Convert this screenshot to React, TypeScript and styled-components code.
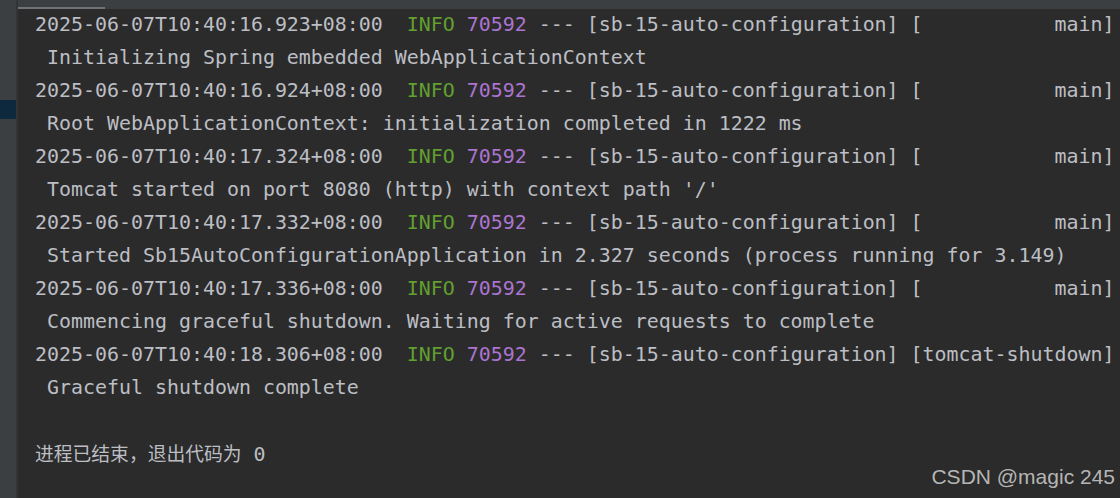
import React from "react";
import styled, { createGlobalStyle } from "styled-components";

const Global = createGlobalStyle`
  html, body { margin: 0; padding: 0; background: #2b2b2b; }
  #root { width: 1120px; height: 498px; overflow: hidden; }
`;

const Frame = styled.div`
  position: relative;
  display: flex;
  width: 1120px;
  height: 498px;
  background: #2b2b2b;
  overflow: hidden;
`;

const Sidebar = styled.div`
  width: 16px;
  flex: none;
  background: #3c3f41;
  display: flex;
  flex-direction: column;
  padding-top: 100px;
  box-sizing: border-box;
`;

const SelectedItem = styled.div`
  height: 19px;
  background: #0d293e;
`;

const Divider = styled.div`
  width: 2px;
  flex: none;
  background: #323436;
`;

const Main = styled.div`
  flex: 1;
  display: flex;
  flex-direction: column;
  min-width: 0;
`;

const TopBar = styled.div`
  height: 9px;
  flex: none;
  background: #3c3f41;
  display: flex;
  align-items: flex-end;
  position: relative;
  z-index: 1;
`;

const Thumb = styled.div`
  width: 87px;
  height: 2px;
  background: #6f7276;
`;

const Log = styled.div`
  margin-top: -1.5px;
  padding-left: 17px;
  font-family: "DejaVu Sans Mono", "Liberation Mono", monospace;
  font-size: 19.93px;
  line-height: 33.08px;
  color: #bcbec4;
  white-space: pre;
`;

const Line = styled.div`
  height: 33.08px;
`;

const Level = styled.span`
  color: #62a030;
`;

const Pid = styled.span`
  color: #ab74cf;
`;

const Cjk = styled.span`
  font-family: "Noto Sans CJK SC", sans-serif;
  font-size: 18.8px;
  line-height: 0;
`;

const Watermark = styled.div`
  position: absolute;
  right: 5px;
  top: 464px;
  font-family: "Liberation Sans", Arial, sans-serif;
  font-size: 21px;
  color: rgba(200, 200, 200, 0.9);
  line-height: 26px;
`;

type Entry = { time: string; thread: string; msg: string };

const entries: Entry[] = [
  { time: "2025-06-07T10:40:16.923+08:00", thread: "           main", msg: " Initializing Spring embedded WebApplicationContext" },
  { time: "2025-06-07T10:40:16.924+08:00", thread: "           main", msg: " Root WebApplicationContext: initialization completed in 1222 ms" },
  { time: "2025-06-07T10:40:17.324+08:00", thread: "           main", msg: " Tomcat started on port 8080 (http) with context path '/'" },
  { time: "2025-06-07T10:40:17.332+08:00", thread: "           main", msg: " Started Sb15AutoConfigurationApplication in 2.327 seconds (process running for 3.149)" },
  { time: "2025-06-07T10:40:17.336+08:00", thread: "           main", msg: " Commencing graceful shutdown. Waiting for active requests to complete" },
  { time: "2025-06-07T10:40:18.306+08:00", thread: "tomcat-shutdown", msg: " Graceful shutdown complete" },
];

export default function App() {
  return (
    <>
      <Global />
      <Frame>
        <Sidebar>
          <SelectedItem />
        </Sidebar>
        <Divider />
        <Main>
          <TopBar>
            <Thumb />
          </TopBar>
          <Log>
            {entries.map((e, i) => (
              <React.Fragment key={i}>
                <Line>
                  {e.time}  <Level>INFO</Level> <Pid>70592</Pid> --- [sb-15-auto-configuration] [{e.thread}]
                </Line>
                <Line>{e.msg}</Line>
              </React.Fragment>
            ))}
            <Line> </Line>
            <Line>
              <Cjk>进程已结束，退出代码为</Cjk> 0
            </Line>
          </Log>
        </Main>
        <Watermark>CSDN @magic 245</Watermark>
      </Frame>
    </>
  );
}
